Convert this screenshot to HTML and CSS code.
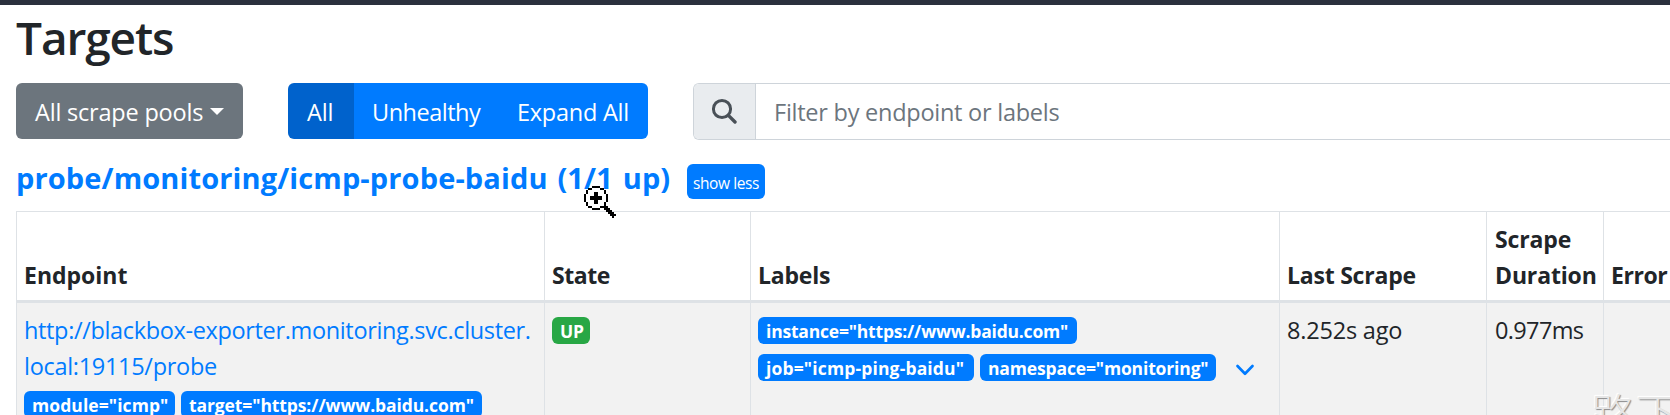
FILE: index.html
```html
<!DOCTYPE html>
<html lang="en">
<head>
<meta charset="utf-8">
<title>Targets</title>
<link rel="stylesheet" href="styles.css">
</head>
<body>
<header class="navbar"></header>
<main class="page">
  <h2 class="title">Targets</h2>
  <div class="toolbar">
    <button class="btn btn-secondary">All scrape pools<span class="caret"></span></button>
    <div class="btn-group">
      <button class="btn btn-primary active">All</button>
      <button class="btn btn-primary unhealthy">Unhealthy</button>
      <button class="btn btn-primary expand">Expand All</button>
    </div>
    <div class="search">
      <span class="search-icon">
        <svg width="26" height="26" viewBox="0 0 26 26" fill="none" stroke="#495057"><circle cx="11" cy="11" r="8.6" stroke-width="3"/><path d="M17.4 17.4L24 24" stroke-width="3.4" stroke-linecap="round"/></svg>
      </span>
      <span class="placeholder">Filter by endpoint or labels</span>
    </div>
  </div>
  <div class="pool">
    <h3 class="pool-name">probe/monitoring/icmp-probe-baidu (1/1 up)</h3>
    <button class="btn-xs">show less</button>
  </div>
  <table class="targets">
    <colgroup><col class="c-endpoint"><col class="c-state"><col class="c-labels"><col class="c-last"><col class="c-duration"><col class="c-error"></colgroup>
    <thead>
      <tr><th>Endpoint</th><th class="tight">State</th><th class="snug">Labels</th><th class="snug">Last Scrape</th><th class="duration">Scrape Duration</th><th class="tight">Error</th></tr>
    </thead>
    <tbody>
      <tr>
        <td><a class="url">http://blackbox-exporter.monitoring.svc.cluster.<br><span class="url-end">local:19115/probe</span></a>
          <div class="badges params"><span class="badge b-module">module="icmp"</span><span class="badge b-target">target="https://www.baidu.com"</span></div></td>
        <td><div class="badges first"><span class="badge up">UP</span></div></td>
        <td><div class="badges first"><span class="badge b-instance">instance="https://www.baidu.com"</span></div>
          <div class="badges"><span class="badge b-job">job="icmp-ping-baidu"</span><span class="badge b-ns">namespace="monitoring"</span><svg class="chevron" width="20" height="12" viewBox="0 0 20 12" fill="none" stroke="#007bff" stroke-width="2.7" stroke-linecap="round" stroke-linejoin="round"><path d="M2.5 2L10 9.7L17.5 2"/></svg></div></td>
        <td class="age">8.252s ago</td>
        <td class="ms">0.977ms</td>
        <td></td>
      </tr>
    </tbody>
  </table>
</main>
<svg class="cursor" width="34" height="34" viewBox="0 0 17 17" shape-rendering="crispEdges"><path fill="#fff" d="M4 1h5v1h1v1h1v1h1v5h-1v1h-1v1h-1v1h-5v-1h-1v-1h-1v-1h-1v-5h1v-1h1v-1h1z"/><path fill="#000" d="M4 0h4v1h-4zM2 1h2v1h-2zM8 1h2v1h-2zM1 2h1v2h-1zM10 2h1v2h-1zM0 4h1v4h-1zM11 4h1v4h-1zM1 8h1v2h-1zM10 8h1v2h-1zM2 10h2v1h-2zM8 10h2v1h-2zM4 11h4v1h-4zM5 3h2v2h2v2h-2v2h-2v-2h-2v-2h2zM10 10h2v1h1v1h1v1h1v1h1v1h-1v1h-1v-1h-1v-1h-1v-1h-1v-1h-1z"/></svg>
<div class="watermark">路下</div>
</body>
</html>
```
FILE: styles.css
```css
* { box-sizing: border-box; }
body {
  margin: 0;
  width: 1670px;
  height: 415px;
  overflow: hidden;
  position: relative;
  background: #fff;
  color: #212529;
  font: 23.5px/36px "Open Sans", "Noto Sans", sans-serif;
}
.navbar { height: 5px; background: #2b303d; }
.page { padding-left: 16px; width: 1670px; height: 410px; overflow: hidden; }
.title {
  margin: 0;
  padding-top: 4px;
  height: 78px;
  font-size: 46px;
  font-weight: 600;
  line-height: 56px;
  letter-spacing: -1.1px;
}
.toolbar { display: flex; height: 57px; }
.btn {
  flex: none;
  height: 56px;
  border: 0;
  padding: 1px 0 0 19px;
  font: inherit;
  color: #fff;
  text-align: left;
  white-space: nowrap;
}
.btn-secondary {
  width: 227px;
  border-radius: 6px;
  background: #6c757d;
  letter-spacing: -0.2px;
}
.caret {
  display: inline-block;
  margin-left: 7px;
  vertical-align: 6px;
  border: 7px solid transparent;
  border-top-color: #fff;
  border-bottom: 0;
}
.btn-group {
  display: flex;
  flex: none;
  width: 360px;
  margin-left: 45px;
  border-radius: 6px;
  overflow: hidden;
  height: 56px;
}
.btn-primary { background: #007bff; }
.active { width: 66px; background: #0062cc; letter-spacing: -0.1px; }
.unhealthy { width: 144px; padding-left: 18px; letter-spacing: -0.5px; }
.expand { width: 150px; padding-left: 19px; letter-spacing: -0.25px; }
.search {
  display: flex;
  flex: 1;
  height: 57px;
  margin-left: 45px;
  border: 1px solid #ced4da;
  border-right: 0;
  border-radius: 6px 0 0 6px;
  overflow: hidden;
}
.search-icon {
  width: 62px;
  padding: 14px 0 0 17px;
  background: #e9ecef;
  border-right: 1px solid #ced4da;
  line-height: 0;
}
.placeholder {
  padding: 10px 0 0 18px;
  color: #6c757d;
  letter-spacing: -0.25px;
}
.pool { display: flex; height: 71px; padding-top: 24px; }
.pool-name {
  margin: -1px 0 0;
  width: 671px;
  color: #007bff;
  font-size: 29px;
  font-weight: 700;
  line-height: 30px;
  letter-spacing: 0.12px;
  word-spacing: 2.2px;
  white-space: nowrap;
}
.btn-xs {
  width: 78px;
  height: 35px;
  border: 0;
  border-radius: 6px;
  padding: 3px 0 0 6px;
  background: #007bff;
  color: #fff;
  font: 15.5px/32px "Open Sans", sans-serif;
  letter-spacing: -0.42px;
  text-align: left;
  white-space: nowrap;
}
.targets {
  width: 1654px;
  table-layout: fixed;
  border-spacing: 0;
  border-top: 1px solid #dee2e6;
}
.c-endpoint { width: 528px; }
.c-state { width: 206px; }
.c-labels { width: 529px; }
.c-last { width: 207px; }
.c-duration { width: 117px; }
th, td { border-left: 1px solid #dee2e6; text-align: left; padding: 0 0 0 7px; }
th {
  height: 91px;
  padding-bottom: 7px;
  border-bottom: 3px solid #dee2e6;
  vertical-align: bottom;
  font-size: 23px;
  font-weight: 700;
}
.duration { padding-left: 8px; letter-spacing: -0.15px; }
.tight { letter-spacing: -0.45px; }
.snug { letter-spacing: -0.22px; }
td {
  height: 112px;
  padding-top: 9px;
  vertical-align: top;
  background: #f2f2f2;
}
.url { color: #007bff; letter-spacing: -0.35px; white-space: nowrap; }
.url-end { letter-spacing: -0.3px; }
.badges { display: flex; gap: 6px; height: 36px; padding-top: 6px; }
.first { padding-top: 5px; }
.params { height: 30px; padding-top: 7px; }
.badge {
  height: 27px;
  padding-left: 8px;
  border-radius: 6px;
  background: #007bff;
  color: #fff;
  font-size: 17.5px;
  font-weight: 700;
  line-height: 28px;
  white-space: nowrap;
}
.b-module { width: 151px; letter-spacing: 0.08px; }
.b-target { width: 301px; letter-spacing: -0.1px; }
.b-instance { width: 319px; letter-spacing: -0.2px; }
.b-job { width: 216px; letter-spacing: 0.15px; }
.b-ns { width: 236px; letter-spacing: -0.15px; }
.up { width: 38px; background: #28a745; letter-spacing: -0.3px; }
.age { letter-spacing: -0.2px; }
.ms { padding-left: 8px; letter-spacing: -0.65px; }
.chevron { margin: 10px 0 0 13px; }
.cursor { position: absolute; left: 584px; top: 186px; }
.watermark {
  position: absolute;
  left: 1591px;
  top: 385px;
  width: 79px;
  height: 30px;
  overflow: hidden;
  font: 300 45px/56px "Noto Sans CJK SC", sans-serif;
  color: #e6e6e6;
  text-shadow: 1px 1px 1px #8b8b8b, -1px -1px 1px #fff;
  white-space: nowrap;
}
```
